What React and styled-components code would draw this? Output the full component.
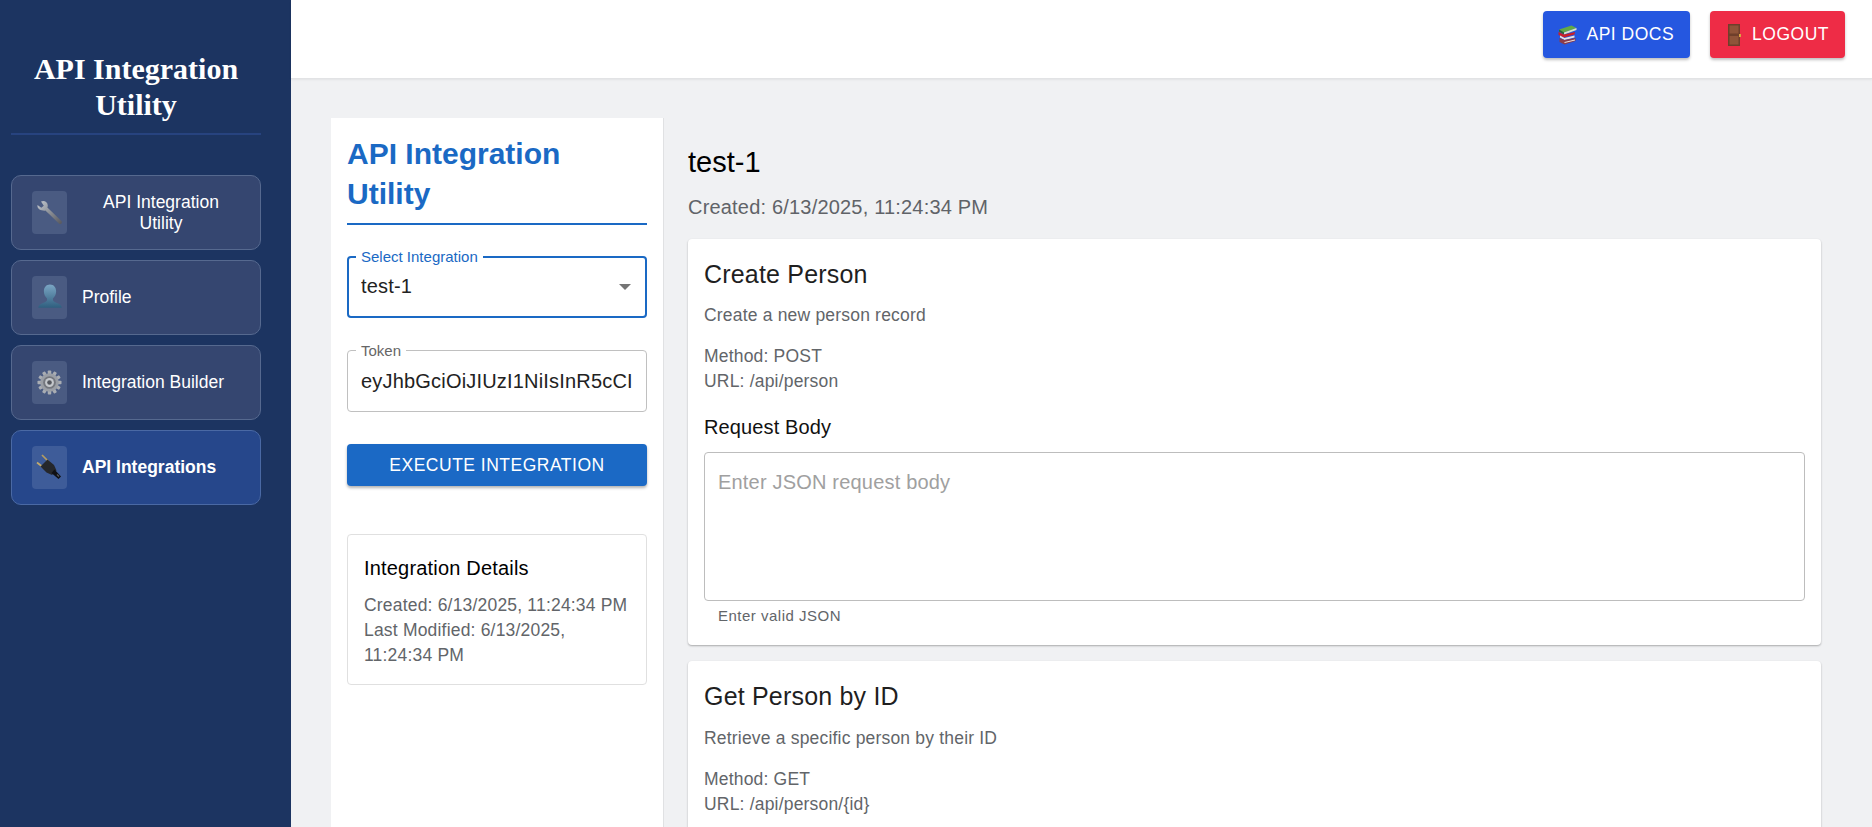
import React from 'react';
import styled, { createGlobalStyle } from 'styled-components';

const GlobalStyle = createGlobalStyle`
  html, body {
    margin: 0;
    padding: 0;
    height: 100%;
    overflow: hidden;
    background: #f0f1f3;
    font-family: "Liberation Sans", Arial, sans-serif;
  }
  * { box-sizing: border-box; }
`;

const WrenchIcon = () => (
  <svg width="27" height="27" viewBox="0 0 27 27">
    <defs>
      <linearGradient id="wr" x1="0" y1="0" x2="1" y2="1">
        <stop offset="0" stopColor="#c3c9d0" />
        <stop offset="0.5" stopColor="#8b8f96" />
        <stop offset="1" stopColor="#55565c" />
      </linearGradient>
    </defs>
    <path
      d="M1.500 6 5.300 8.800 7.800 6.800 5 2.600C8.200 1 11.600 3 11.800 6.400c0 .8-.1 1.400-.4 2l14 13.600c.7.700.7 1.800 0 2.500-.7.700-1.800.7-2.500 0L9.400 11.400c-.8.300-1.600.3-2.400.2C3.400 11 1 9.400 1.500 6Z"
      fill="url(#wr)"
    />
  </svg>
);

const PersonIcon = () => (
  <svg width="26" height="29" viewBox="0 0 28 30">
    <defs>
      <linearGradient id="pr" x1="0" y1="0" x2="0" y2="1">
        <stop offset="0" stopColor="#7ba6c4" />
        <stop offset="1" stopColor="#2f5f7f" />
      </linearGradient>
    </defs>
    <path
      d="M14 1c4 0 6.600 3 6.600 7.400 0 3.400-1.500 6-3.400 7.600v2c0 1.200 3 2.400 5.600 3.400 2 .8 3.600 2 3.900 4.600H1.300c.3-2.600 1.900-3.800 3.900-4.600 2.600-1 5.600-2.200 5.600-3.400v-2C8.900 14.400 7.400 11.800 7.400 8.400 7.400 4 10 1 14 1Z"
      fill="url(#pr)"
    />
  </svg>
);

const GearIcon = () => {
  const teeth = Array.from({ length: 12 }, (_, i) => i * 30);
  return (
    <svg width="25" height="25" viewBox="0 0 26 26">
      {teeth.map((a) => (
        <rect key={a} x="11.200" y="0.500" width="3.600" height="5" rx="0.800" fill="#a9adb3" transform={`rotate(${a} 13 13)`} />
      ))}
      <circle cx="13" cy="13" r="9.600" fill="#9a9ea5" />
      <circle cx="13" cy="13" r="6.600" fill="#74777e" />
      <circle cx="13" cy="13" r="4.600" fill="#c5c8cc" />
      <circle cx="13" cy="13" r="2.400" fill="#55585f" />
    </svg>
  );
};

const PlugIcon = () => (
  <svg width="27" height="27" viewBox="0 0 27 27">
    <path d="M6 1 13 8" stroke="#b39c62" strokeWidth="1.700" />
    <path d="M1 8.500 8 14" stroke="#c4ab6c" strokeWidth="1.700" />
    <path d="M11.500 5.500 18 11l2.500 5.500-4.500 4.500-5.500-2.500L4.500 12.500Z" fill="#25272b" />
    <path d="M18.500 15.500l6.500 7-2.500 2.500-7-6Z" fill="#0f1013" />
    <path d="M21 20.500l2 2" stroke="#55585f" strokeWidth="1.200" />
  </svg>
);

const BooksIcon = () => (
  <svg width="19" height="20" viewBox="0 0 19 20">
    <path d="M1 4.500 13.500 0.500 18.500 3 6 7.500Z" fill="#63a946" />
    <path d="M6 7.500 18.500 3v2L6 9.500Z" fill="#d8e2d0" />
    <path d="M1 4.500 6 7.500v2L1 6.500Z" fill="#2f6a2c" />
    <path d="M0.500 7 6 9.500l11-2.500-.5 2.500L6 12.500.5 10Z" fill="#c8202c" />
    <path d="M2 10.500 6.500 13l10-2.500v2L6.500 15 2 12.500Z" fill="#e8e4e4" />
    <path d="M1.500 13 6.500 15l11-2v3L6.500 19.500 1.500 17Z" fill="#8c3b4a" />
    <path d="M6.500 17 17 14.500v1L6.500 18Z" fill="#e8e4e4" />
  </svg>
);

const DoorIcon = () => (
  <svg width="13" height="22" viewBox="0 0 13 22">
    <rect x="0" y="0" width="12" height="22" fill="#6f3f2b" />
    <rect x="1.500" y="1.500" width="9" height="8" fill="#8f5439" />
    <rect x="1.500" y="12" width="9" height="8.500" fill="#8f5439" />
    <rect x="11" y="10" width="2" height="3" fill="#d9a441" />
  </svg>
);

const Page = styled.div`
  display: flex;
  width: 100%;
  height: 100vh;
  overflow: hidden;
`;

const Sidebar = styled.aside`
  flex: 0 0 291px;
  background: #1c3461;
  padding: 51px 30px 0 11px;
`;

const Brand = styled.h1`
  margin: 0 0 40px;
  padding: 0 0 10px;
  border-bottom: 2px solid #27437f;
  font-family: "Liberation Serif", "Times New Roman", serif;
  font-size: 30px;
  line-height: 36px;
  font-weight: 700;
  color: #fff;
  text-align: center;
`;

const NavList = styled.nav`
  display: flex;
  flex-direction: column;
  gap: 10px;
`;

const NavItem = styled.div`
  display: flex;
  align-items: center;
  height: 75px;
  padding: 0 20px;
  gap: 15px;
  border-radius: 10px;
  border: 1px solid ${(p) => (p.$active ? '#4a69a4' : '#56698f')};
  background: ${(p) => (p.$active ? '#26478b' : '#354670')};
`;

const NavIconBox = styled.span`
  flex: 0 0 35px;
  height: 43px;
  display: flex;
  align-items: center;
  justify-content: center;
  border-radius: 4px;
  background: ${(p) => (p.$active ? '#3e5c99' : '#4a5b82')};
`;

const NavLabel = styled.span`
  flex: 1;
  font-size: 17.500px;
  line-height: 21px;
  color: #fff;
  font-weight: ${(p) => (p.$active ? 700 : 400)};
  text-align: ${(p) => (p.$center ? 'center' : 'left')};
`;

const Column = styled.div`
  flex: 1;
  min-width: 0;
  display: flex;
  flex-direction: column;
`;

const TopBar = styled.header`
  flex: 0 0 79px;
  display: flex;
  justify-content: flex-end;
  align-items: flex-start;
  gap: 20px;
  padding: 11px 27px 0 0;
  background: #fff;
  border-bottom: 1px solid #e2e3e5;
  box-shadow: 0 1px 2px rgba(0, 0, 0, 0.06);
`;

const TopButton = styled.button`
  display: flex;
  align-items: center;
  gap: ${(p) => p.$gap}px;
  height: 47px;
  padding: 0 16px 0 ${(p) => p.$left}px;
  border: 0;
  border-radius: 4px;
  background: ${(p) => p.$bg};
  color: #fff;
  font: 400 17.500px "Liberation Sans", Arial, sans-serif;
  letter-spacing: 0.5px;
  box-shadow: 0 2px 3px rgba(0, 0, 0, 0.25);
`;

const Body = styled.div`
  flex: 1;
  min-height: 0;
  display: flex;
  padding: 39px 51px 0 40px;
  gap: 24px;
`;

const Panel = styled.section`
  flex: 0 0 333px;
  background: #fff;
  border-right: 1px solid #e0e1e3;
  padding: 16px 16px 0;
`;

const PanelTitle = styled.h2`
  margin: 0 0 31px;
  padding: 0 0 9px;
  border-bottom: 2px solid #1a69c4;
  font-size: 30px;
  line-height: 40px;
  font-weight: 700;
  color: #1a69c4;
`;

const Field = styled.div`
  position: relative;
  height: 62px;
  margin-bottom: 32px;
  display: flex;
  align-items: center;
  justify-content: space-between;
  border-radius: 4px;
  border: ${(p) => (p.$focused ? '2px solid #1a69c4' : '1px solid #c0c0c0')};
  padding: 0 13px 0 ${(p) => (p.$focused ? 12 : 13)}px;
`;

const FieldLabel = styled.span`
  position: absolute;
  left: ${(p) => (p.$focused ? 7 : 8)}px;
  top: ${(p) => (p.$focused ? -9 : -8)}px;
  padding: 0 5px;
  background: #fff;
  font-size: 15px;
  line-height: 16px;
  color: ${(p) => (p.$focused ? '#1a69c4' : '#666')};
`;

const FieldValue = styled.span`
  margin-bottom: ${(p) => (p.$raised ? 2 : 0)}px;
  font-size: 20px;
  letter-spacing: 0.19px;
  color: #222;
  white-space: nowrap;
  overflow: hidden;
`;

const Caret = styled.span`
  width: 0;
  height: 0;
  margin-right: 1px;
  border-left: 6px solid transparent;
  border-right: 6px solid transparent;
  border-top: 6px solid #757575;
`;

const ExecuteButton = styled.button`
  display: block;
  width: 100%;
  height: 42px;
  margin-bottom: 48px;
  border: 0;
  border-radius: 4px;
  background: #1b69c5;
  color: #fff;
  font: 400 17.500px "Liberation Sans", Arial, sans-serif;
  letter-spacing: 0.5px;
  box-shadow: 0 2px 3px rgba(0, 0, 0, 0.3);
`;

const DetailsBox = styled.div`
  height: 151px;
  padding: 21px 16px 0;
  border: 1px solid #e0e0e0;
  border-radius: 4px;
`;

const DetailsTitle = styled.h3`
  margin: 0 0 13px;
  font-size: 20px;
  letter-spacing: 0.19px;
  line-height: 24px;
  font-weight: 400;
  color: #000;
`;

const MutedText = styled.div`
  font-size: 17.500px;
  letter-spacing: 0.19px;
  line-height: 25px;
  color: #626569;
`;

const Main = styled.main`
  flex: 1;
  min-width: 0;
  padding-top: 26px;
`;

const MainTitle = styled.h2`
  margin: 0 0 15px;
  font-size: 29px;
  line-height: 36px;
  font-weight: 400;
  color: #000;
`;

const CreatedLine = styled.div`
  margin-bottom: 20px;
  font-size: 20px;
  letter-spacing: 0.19px;
  line-height: 24px;
  color: #606368;
`;

const Card = styled.article`
  margin-bottom: 16px;
  padding: 19px 16px 0;
  background: #fff;
  border-radius: 4px;
  box-shadow: 0 1px 2px rgba(0, 0, 0, 0.3);
  height: ${(p) => p.$height}px;
`;

const CardTitle = styled.h3`
  margin: 0 0 ${(p) => p.$gap}px;
  font-size: 25px;
  letter-spacing: 0.19px;
  line-height: 32px;
  font-weight: 400;
  color: #1f1f1f;
`;

const CardDesc = styled.div`
  margin-bottom: 19px;
  font-size: 17.500px;
  letter-spacing: 0.19px;
  line-height: 20px;
  color: #626569;
`;

const SectionLabel = styled.h4`
  margin: 21px 0 13px;
  font-size: 20px;
  letter-spacing: 0.12px;
  line-height: 24px;
  font-weight: 400;
  color: #111;
`;

const BodyBox = styled.div`
  height: 149px;
  padding: 16px 13px;
  border: 1px solid #bdbdbd;
  border-radius: 4px;
  font-size: 20px;
  letter-spacing: 0.19px;
  line-height: 26px;
  color: #a0a0a0;
`;

const Helper = styled.div`
  margin: 6px 0 0 14px;
  font-size: 15px;
  letter-spacing: 0.5px;
  line-height: 18px;
  color: #626569;
`;

const navItems = [
  { icon: <WrenchIcon />, label: 'API Integration Utility', center: true },
  { icon: <PersonIcon />, label: 'Profile' },
  { icon: <GearIcon />, label: 'Integration Builder' },
  { icon: <PlugIcon />, label: 'API Integrations', active: true },
];

export default function App() {
  return (
    <Page>
      <GlobalStyle />
      <Sidebar>
        <Brand>API Integration Utility</Brand>
        <NavList>
          {navItems.map((item) => (
            <NavItem key={item.label} $active={item.active}>
              <NavIconBox $active={item.active}>{item.icon}</NavIconBox>
              <NavLabel $active={item.active} $center={item.center}>
                {item.label}
              </NavLabel>
            </NavItem>
          ))}
        </NavList>
      </Sidebar>
      <Column>
        <TopBar>
          <TopButton $bg="#2557e0" $left={15} $gap={9}>
            <BooksIcon />
            API DOCS
          </TopButton>
          <TopButton $bg="#ee2c46" $left={18} $gap={11}>
            <DoorIcon />
            LOGOUT
          </TopButton>
        </TopBar>
        <Body>
          <Panel>
            <PanelTitle>API Integration Utility</PanelTitle>
            <Field $focused>
              <FieldLabel $focused>Select Integration</FieldLabel>
              <FieldValue $raised>test-1</FieldValue>
              <Caret />
            </Field>
            <Field>
              <FieldLabel>Token</FieldLabel>
              <FieldValue>eyJhbGciOiJIUzI1NiIsInR5cCI</FieldValue>
            </Field>
            <ExecuteButton>EXECUTE INTEGRATION</ExecuteButton>
            <DetailsBox>
              <DetailsTitle>Integration Details</DetailsTitle>
              <MutedText>Created: 6/13/2025, 11:24:34 PM</MutedText>
              <MutedText>Last Modified: 6/13/2025, 11:24:34 PM</MutedText>
            </DetailsBox>
          </Panel>
          <Main>
            <MainTitle>test-1</MainTitle>
            <CreatedLine>Created: 6/13/2025, 11:24:34 PM</CreatedLine>
            <Card $height={406}>
              <CardTitle $gap={15}>Create Person</CardTitle>
              <CardDesc>Create a new person record</CardDesc>
              <MutedText>Method: POST</MutedText>
              <MutedText>URL: /api/person</MutedText>
              <SectionLabel>Request Body</SectionLabel>
              <BodyBox>Enter JSON request body</BodyBox>
              <Helper>Enter valid JSON</Helper>
            </Card>
            <Card $height={300}>
              <CardTitle $gap={16}>Get Person by ID</CardTitle>
              <CardDesc>Retrieve a specific person by their ID</CardDesc>
              <MutedText>Method: GET</MutedText>
              <MutedText>URL: /api/person/{'{id}'}</MutedText>
            </Card>
          </Main>
        </Body>
      </Column>
    </Page>
  );
}
